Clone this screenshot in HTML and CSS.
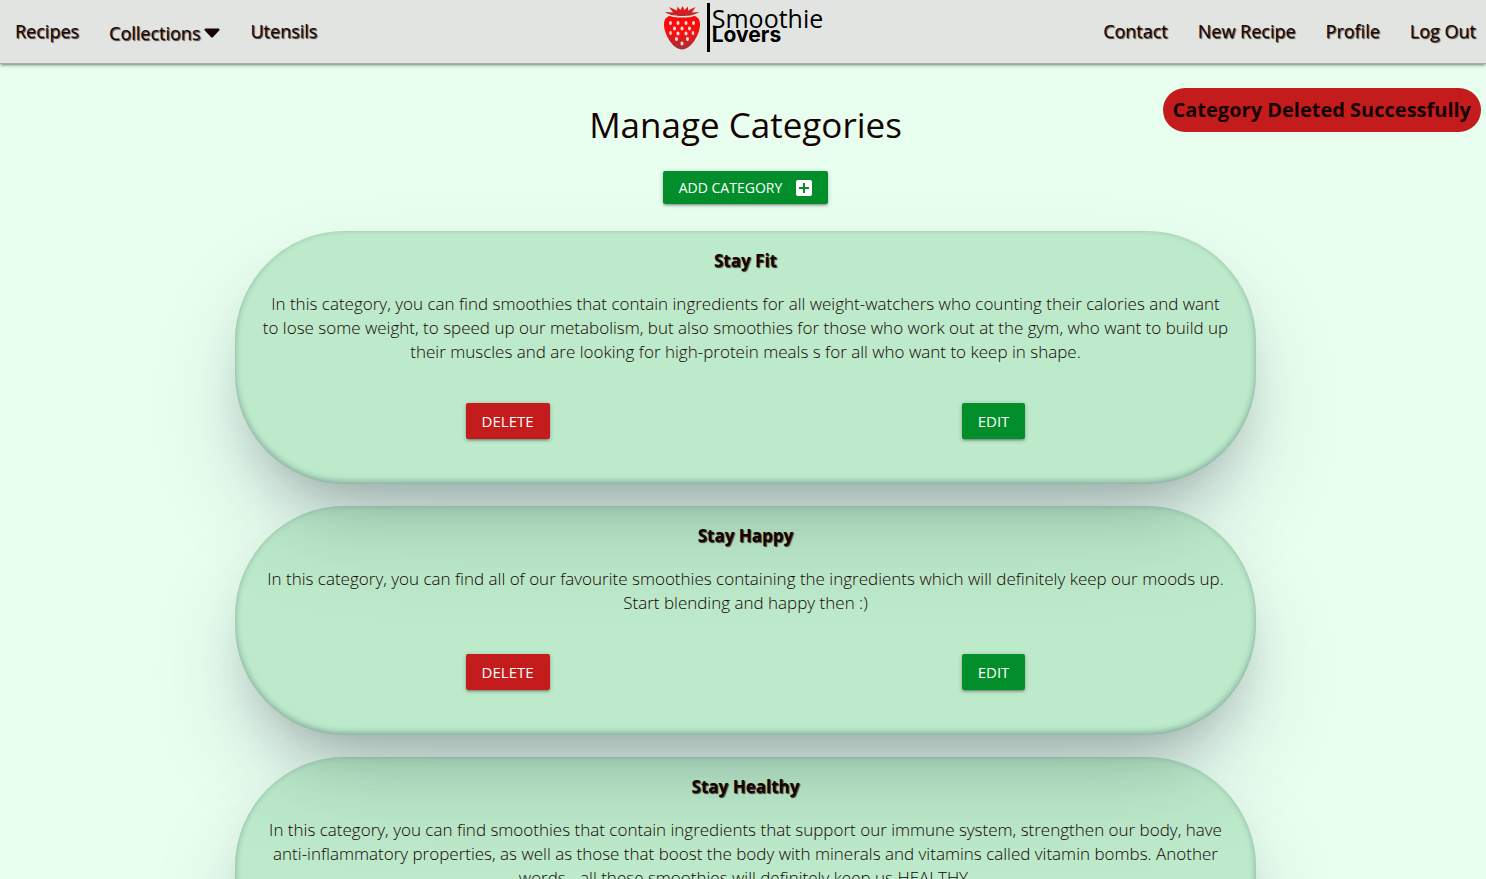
FILE: index.html
```html
<!DOCTYPE html>
<html lang="en">
<head>
<meta charset="utf-8">
<meta name="viewport" content="width=device-width, initial-scale=1">
<title>Smoothie Lovers - Manage Categories</title>
<link rel="stylesheet" href="styles.css">
</head>
<body>
<header class="navbar">
  <nav class="nav-group" aria-label="Browse">
    <a class="nav-link" href="#recipes">Recipes</a>
    <a class="nav-link nav-drop" href="#collections">Collections
      <svg class="caret" viewBox="0 0 16 10" aria-hidden="true"><path d="M1.8.5h12.4c1.3 0 1.8 1.2 1 2L9.1 8.9c-.7.7-1.5.7-2.2 0L.8 2.5C0 1.700.5.5 1.800.5z"/></svg>
    </a>
    <a class="nav-link" href="#utensils">Utensils</a>
  </nav>
  <a class="brand" href="#home" aria-label="Smoothie Lovers">
    <svg class="berry" viewBox="0 0 38 44" aria-hidden="true">
      <defs>
        <linearGradient id="berry-skin" x1="0" y1="0" x2="0" y2="1"><stop offset="0" stop-color="#ff0808"/><stop offset=".5" stop-color="#fa1010"/><stop offset="1" stop-color="#a23035"/></linearGradient>
        <linearGradient id="berry-crown" x1="0" y1="0" x2="0" y2="1"><stop offset="0" stop-color="#ff1010"/><stop offset="1" stop-color="#b52a2e"/></linearGradient>
      </defs>
      <path fill="url(#berry-skin)" d="M7 10C10 12 28 12 31 10c4 .5 6 4 6 8.500 0 10-9 25-18 25S1 28.500 1 18.500C1 14 3 10.500 7 10z"/>
      <path fill="url(#berry-crown)" stroke="#e1e4e0" stroke-width="1" paint-order="stroke" d="M2 6 10 6.500 6 1 14 4.500 14.500.5 17.500 4 19.500 0 21.500 4 25 .5 25 4.500 32.500 1 29 6.500 36 6C31 9.500 26 10 19 10S7 9.500 2 6z"/>
      <g fill="#f4dfdc"><ellipse cx="7.500" cy="17" rx="1.500" ry="2"/><ellipse cx="15" cy="17" rx="1.500" ry="2"/><ellipse cx="23" cy="17" rx="1.500" ry="2"/><ellipse cx="30.500" cy="17" rx="1.500" ry="2"/><ellipse cx="11.500" cy="22.500" rx="1.500" ry="2"/><ellipse cx="19" cy="22.500" rx="1.500" ry="2"/><ellipse cx="26.500" cy="22.500" rx="1.500" ry="2"/><ellipse cx="7.500" cy="27" rx="1.300" ry="2"/><ellipse cx="15" cy="27.500" rx="1.500" ry="2"/><ellipse cx="23" cy="27.500" rx="1.500" ry="2"/><ellipse cx="30" cy="27" rx="1.300" ry="2"/><ellipse cx="13.500" cy="33" rx="1.500" ry="2"/><ellipse cx="24.500" cy="33" rx="1.500" ry="2"/><ellipse cx="19" cy="37.500" rx="1.500" ry="2"/></g>
    </svg>
    <span class="brand-text"><span class="brand-top">Smoothie</span><span class="brand-bottom">Lovers</span></span>
  </a>
  <nav class="nav-group nav-end" aria-label="Account">
    <a class="nav-link" href="#contact">Contact</a>
    <a class="nav-link" href="#new">New Recipe</a>
    <a class="nav-link" href="#profile">Profile</a>
    <a class="nav-link" href="#logout">Log Out</a>
  </nav>
</header>
<div class="toast" role="status">Category Deleted Successfully</div>
<main class="page">
  <h1 class="title">Manage Categories</h1>
  <button class="btn btn-add" type="button">ADD CATEGORY
    <svg class="plus" viewBox="0 0 16 16" aria-hidden="true"><path fill="#fff" fill-rule="evenodd" d="M2 0h12a2 2 0 0 1 2 2v12a2 2 0 0 1-2 2H2a2 2 0 0 1-2-2V2a2 2 0 0 1 2-2zm5 3v4H3v2h4v4h2V9h4V7H9V3z"/></svg>
  </button>
  <section class="list">
    <article class="card">
      <h2 class="card-title">Stay Fit</h2>
      <p class="card-text">In this category, you can find smoothies that contain ingredients for all weight-watchers who counting their calories and want<br> to lose some weight, to speed up our metabolism, but also smoothies for those who work out at the gym, who want to build up<br> their muscles and are looking for high-protein meals s for all who want to keep in shape.</p>
      <div class="actions"><button class="btn btn-delete" type="button">DELETE</button><button class="btn" type="button">EDIT</button></div>
    </article>
    <article class="card">
      <h2 class="card-title">Stay Happy</h2>
      <p class="card-text">In this category, you can find all of our favourite smoothies containing the ingredients which will definitely keep our moods up. Start blending and happy then :)</p>
      <div class="actions"><button class="btn btn-delete" type="button">DELETE</button><button class="btn" type="button">EDIT</button></div>
    </article>
    <article class="card">
      <h2 class="card-title">Stay Healthy</h2>
      <p class="card-text">In this category, you can find smoothies that contain ingredients that support our immune system, strengthen our body, have<br> anti-inflammatory properties, as well as those that boost the body with minerals and vitamins called vitamin bombs. Another<br> words - all these smoothies will definitely keep us HEALTHY.</p>
      <div class="actions"><button class="btn btn-delete" type="button">DELETE</button><button class="btn" type="button">EDIT</button></div>
    </article>
  </section>
</main>
</body>
</html>
```
FILE: styles.css
```css
* { box-sizing: border-box; }
body {
  margin: 0;
  position: relative;
  background: #e8ffef;
  color: #160303;
  font-family: "Open Sans", "Noto Sans", sans-serif;
  font-size: 16px;
  line-height: 24px;
}
.navbar {
  display: grid;
  grid-template-columns: 1fr auto 1fr;
  height: 64px;
  background: #e1e4e0;
  box-shadow: 0 2px 2px 0 rgba(0,0,0,.14), 0 3px 1px -2px rgba(0,0,0,.12), 0 1px 5px 0 rgba(0,0,0,.2);
  border-bottom: 1px solid #a3b0a8;
}
.nav-group { display: flex; align-items: center; gap: 30px; padding: 0 15px 2px; }
.nav-end { justify-content: flex-end; padding: 0 10px 2px; }
.nav-link {
  color: #160303;
  font-size: 18px;
  text-decoration: none;
  text-shadow: 1px 1px 1px rgba(22,3,3,.8);
}
.nav-drop { display: flex; align-items: center; gap: 4px; padding-top: 4px; }
.caret { width: 16px; height: 10px; fill: #160303; }
.brand { display: flex; gap: 6px; padding-top: 3px; color: #000; text-decoration: none; }
.berry { width: 38px; height: 44px; margin-top: 3px; }
.brand-text {
  display: flex;
  flex-direction: column;
  height: 49px;
  padding-left: 2px;
  border-left: 3px solid #000;
}
.brand-top { font-size: 25px; line-height: 30px; }
.brand-bottom { font: 700 21px/4px "Inter", sans-serif; }
.toast {
  position: absolute;
  top: 88px;
  right: 5px;
  padding: 10px;
  border-radius: 22px;
  background: #c41c1c;
  font-size: 20px;
  font-weight: 700;
}
.page {
  display: flex;
  flex-direction: column;
  align-items: center;
  padding: 37px 0 24px 5px;
}
.title { margin: 0 0 22px; font-size: 35px; font-weight: 400; line-height: 48px; }
.btn {
  display: inline-flex;
  align-items: center;
  height: 36px;
  padding: 0 16px;
  border: 0;
  border-radius: 2px;
  background: #028f2b;
  color: #fff;
  font: 400 15px/20px "Open Sans", sans-serif;
  box-shadow: 0 2px 2px 0 rgba(0,0,0,.14), 0 3px 1px -2px rgba(0,0,0,.12), 0 1px 5px 0 rgba(0,0,0,.2);
}
.btn-add { height: 33px; gap: 14px; font-size: 14px; }
.btn-delete { background: #c41c1c; }
.plus { width: 16px; height: 16px; }
.list {
  display: flex;
  flex-direction: column;
  gap: 22px;
  width: 69%;
  margin-top: 27px;
}
.card {
  padding: 18px 20px 45px;
  border-radius: 110px;
  background: rgba(2,143,43,.19);
  text-align: center;
  box-shadow: rgba(50,50,93,.25) 0 50px 100px -20px, rgba(0,0,0,.3) 0 30px 60px -30px, rgba(10,37,64,.35) 0 -2px 6px 0 inset;
}
.card-title {
  margin: 0 0 19px;
  font-size: 17px;
  font-weight: 700;
  line-height: 24px;
  text-shadow: 1px 1px 1px rgba(22,3,3,.8);
}
.card-text { margin: 0 0 39px; font-size: 17px; font-weight: 350; }
.actions { display: flex; justify-content: space-around; padding: 0 5px; }
```
